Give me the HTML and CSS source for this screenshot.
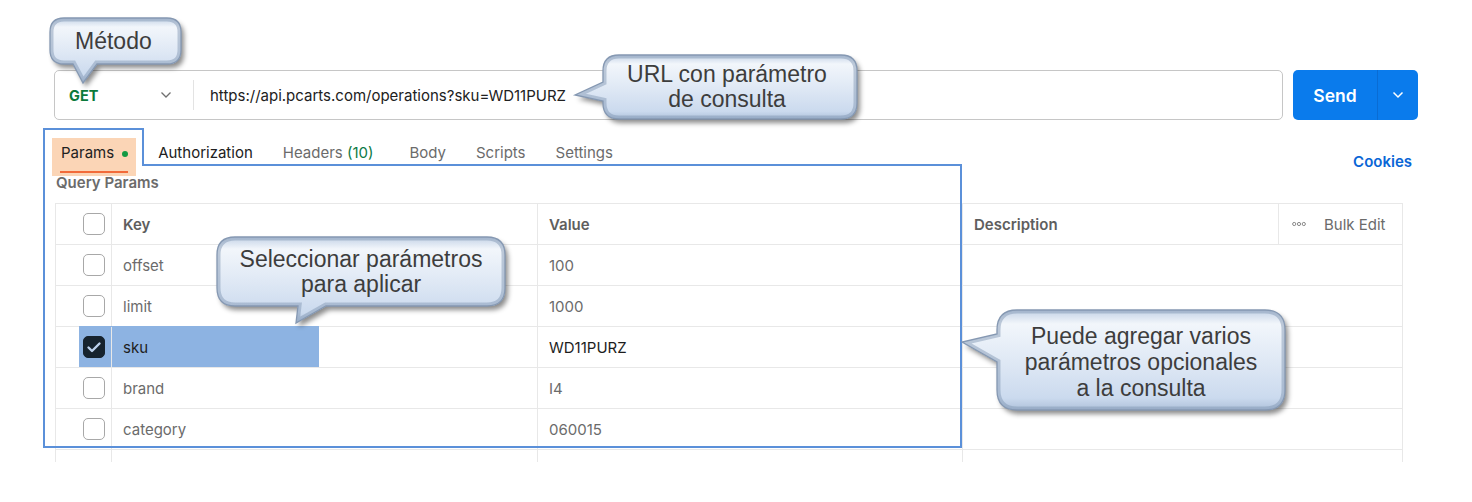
FILE: index.html
```html
<!DOCTYPE html>
<html lang="es">
<head>
<meta charset="utf-8">
<title>Query Params</title>
<link rel="stylesheet" href="styles.css">
</head>
<body>
<main class="app">
  <div class="request-bar">
    <div class="url-box">
      <div class="method">
        <span class="method-name">GET</span>
        <svg class="chev" viewBox="0 0 12 8" width="12" height="8"><path d="M1.5 1.5 L6 6 L10.5 1.5"/></svg>
      </div>
      <span class="url-divider"></span>
      <span class="url-text">https://api.pcarts.com/operations?sku=WD11PURZ</span>
    </div>
    <div class="send-group">
      <button class="send-btn">Send</button>
      <button class="send-more"><svg viewBox="0 0 12 8" width="12" height="8"><path d="M1.5 1.5 L6 6 L10.5 1.5"/></svg></button>
    </div>
  </div>

  <div class="tabs-row">
    <nav class="tabs">
      <span class="tab tab-active">Params<span class="dot"></span></span>
      <span class="tab tab-dark">Authorization</span>
      <span class="tab tab-headers">Headers <span class="count">(10)</span></span>
      <span class="tab">Body</span>
      <span class="tab">Scripts</span>
      <span class="tab">Settings</span>
    </nav>
    <span class="cookies">Cookies</span>
  </div>

  <div class="section-title">Query Params</div>

  <div class="params-table">
    <div class="row head">
      <div class="cell check"><span class="box"></span></div>
      <div class="cell">Key</div>
      <div class="cell">Value</div>
      <div class="cell">Description</div>
      <div class="cell bulk">
        <svg class="dots" viewBox="0 0 14 6" width="14" height="6"><circle cx="2.2" cy="3" r="1.6"/><circle cx="7" cy="3" r="1.6"/><circle cx="11.8" cy="3" r="1.6"/></svg>
        <span>Bulk Edit</span>
      </div>
    </div>
    <div class="row">
      <div class="cell check"><span class="box"></span></div>
      <div class="cell">offset</div>
      <div class="cell">100</div>
      <div class="cell desc"></div>
    </div>
    <div class="row">
      <div class="cell check"><span class="box"></span></div>
      <div class="cell">limit</div>
      <div class="cell">1000</div>
      <div class="cell desc"></div>
    </div>
    <div class="row row-selected">
      <span class="row-mark"></span>
      <div class="cell check"><span class="box box-on"><svg viewBox="0 0 22 22" width="22" height="22"><path d="M5.5 11.5 L9 15 L16.5 7.5"/></svg></span></div>
      <div class="cell strong">sku</div>
      <div class="cell strong">WD11PURZ</div>
      <div class="cell desc"></div>
    </div>
    <div class="row">
      <div class="cell check"><span class="box"></span></div>
      <div class="cell">brand</div>
      <div class="cell">I4</div>
      <div class="cell desc"></div>
    </div>
    <div class="row">
      <div class="cell check"><span class="box"></span></div>
      <div class="cell">category</div>
      <div class="cell">060015</div>
      <div class="cell desc"></div>
    </div>
    <div class="row row-tail">
      <div class="cell check"></div>
      <div class="cell"></div>
      <div class="cell"></div>
      <div class="cell desc"></div>
    </div>
  </div>
</main>

<svg class="annotations" width="1472" height="502" viewBox="0 0 1472 502">
  <defs>
    <linearGradient id="bubFill" x1="0" y1="0" x2="0" y2="1">
      <stop offset="0" stop-color="#c3d2e6"/>
      <stop offset="0.14" stop-color="#f2f6fb"/>
      <stop offset="0.5" stop-color="#e0e9f5"/>
      <stop offset="0.88" stop-color="#cbdaee"/>
      <stop offset="1" stop-color="#aec1da"/>
    </linearGradient>
    <filter id="bubShadow" x="-10%" y="-15%" width="130%" height="150%">
      <feDropShadow dx="3" dy="4" stdDeviation="2.5" flood-color="#000" flood-opacity="0.45"/>
    </filter>
    <path id="b1" d="M64,18 H167 Q181,18 181,32 V50 Q181,64 167,64 H97 L83,83 L73,64 H64 Q50,64 50,50 V32 Q50,18 64,18 Z"/>
    <path id="b2" d="M619,55 H841 Q857,55 857,71 V103 Q857,119 841,119 H619 Q603,119 603,103 V101 L575,95 L603,82 V71 Q603,55 619,55 Z"/>
    <path id="b3" d="M235,237 H487 Q505,237 505,255 V288 Q505,306 487,306 H326 L296,323 L298,306 H235 Q217,306 217,288 V255 Q217,237 235,237 Z"/>
    <path id="b4" d="M1017,310 H1265 Q1285,310 1285,330 V390 Q1285,410 1265,410 H1017 Q997,410 997,390 V362 L962,342 L997,334 V330 Q997,310 1017,310 Z"/>
    <clipPath id="c1"><use href="#b1"/></clipPath>
    <clipPath id="c2"><use href="#b2"/></clipPath>
    <clipPath id="c3"><use href="#b3"/></clipPath>
    <clipPath id="c4"><use href="#b4"/></clipPath>
  </defs>
  <polygon class="frame" points="44,129 143,129 143,165 961,165 961,447 44,447"/>
  <g filter="url(#bubShadow)">
    <use href="#b1" class="bubble"/>
    <use href="#b2" class="bubble"/>
    <use href="#b3" class="bubble"/>
    <use href="#b4" class="bubble"/>
  </g>
  <use href="#b1" class="rim" clip-path="url(#c1)"/>
  <use href="#b2" class="rim" clip-path="url(#c2)"/>
  <use href="#b3" class="rim" clip-path="url(#c3)"/>
  <use href="#b4" class="rim" clip-path="url(#c4)"/>
  <use href="#b1" class="edge"/>
  <use href="#b2" class="edge"/>
  <use href="#b3" class="edge"/>
  <use href="#b4" class="edge"/>
</svg>

<div class="callout lbl-metodo">Método</div>
<div class="callout lbl-url">URL con parámetro<br>de consulta</div>
<div class="callout lbl-sel">Seleccionar parámetros<br>para aplicar</div>
<div class="callout lbl-puede">Puede agregar varios<br>parámetros opcionales<br>a la consulta</div>
</body>
</html>
```

FILE: styles.css
```css
* {
  box-sizing: border-box;
  margin: 0;
  padding: 0;
}

html, body {
  background: #ffffff;
}

body {
  width: 1472px;
  height: 502px;
  overflow: hidden;
  position: relative;
  font-family: Inter, "Noto Sans", sans-serif;
  font-size: 15px;
  color: #212121;
}

.app {
  padding: 70px 54px 0 54px;
}

/* request bar */
.request-bar {
  display: flex;
  gap: 10px;
  height: 50px;
}

.url-box {
  flex: 1;
  display: flex;
  align-items: center;
  border: 1px solid #c6c6c6;
  border-radius: 5px;
}

.method {
  display: flex;
  align-items: center;
  width: 138px;
  height: 100%;
  padding: 0 21px 0 14px;
}

.method-name {
  color: #0b7a3b;
  font-weight: 700;
  font-size: 14.5px;
}

.chev {
  margin-left: auto;
  fill: none;
  stroke: #707070;
  stroke-width: 1.3;
}

.url-divider {
  width: 1px;
  height: 30px;
  background: #e3e3e3;
}

.url-text {
  margin-left: 16px;
  font-size: 15px;
  color: #212121;
}

.send-group {
  display: flex;
  width: 125px;
  border-radius: 5px;
  overflow: hidden;
  background: #0a7bec;
}

.send-btn {
  width: 85px;
  border: 0;
  border-right: 1px solid #0a6cd4;
  background: none;
  color: #ffffff;
  font: 600 17.5px Inter, "Noto Sans", sans-serif;
}

.send-more {
  flex: 1;
  border: 0;
  background: none;
  display: flex;
  align-items: center;
  justify-content: center;
}

.send-more svg {
  fill: none;
  stroke: #ffffff;
  stroke-width: 1.5;
}

/* tabs */
.tabs-row {
  display: flex;
  justify-content: space-between;
  margin-top: 18px;
  height: 38px;
}

.tabs {
  display: flex;
  gap: 30px;
  padding-left: 7px;
}

.tab {
  position: relative;
  display: flex;
  align-items: flex-start;
  padding-top: 5px;
  line-height: 20px;
  color: #6b6b6b;
  white-space: pre;
}

.tab-dark {
  color: #212121;
}

.tab-headers {
  margin-right: 6px;
}

.tab-active {
  color: #212121;
  isolation: isolate;
}

.tab-active::before {
  content: "";
  position: absolute;
  left: -9px;
  right: -8px;
  top: 0;
  bottom: 0;
  background: #fbd5b6;
  z-index: -1;
}

.tab-active::after {
  content: "";
  position: absolute;
  left: -1px;
  right: 0;
  top: 33px;
  height: 2px;
  background: #f26b3a;
}

.dot {
  width: 6px;
  height: 6px;
  border-radius: 50%;
  background: #129a43;
  margin: 8px 0 0 8px;
}

.count {
  color: #0c7a45;
}

.cookies {
  padding-top: 14px;
  line-height: 20px;
  margin-right: 6px;
  color: #0a66d6;
  font-weight: 600;
}

.section-title {
  margin-top: -2px;
  padding-left: 2px;
  line-height: 18px;
  font-weight: 600;
  color: #6b6b6b;
}

/* table */
.params-table {
  margin-top: 11px;
  margin-left: 1px;
  width: 1348px;
  border-top: 1px solid #e8e8e8;
  border-left: 1px solid #e8e8e8;
}

.row {
  position: relative;
  display: grid;
  grid-template-columns: 56px 426px 425px 316px 124px;
  height: 41px;
}

.cell {
  position: relative;
  display: flex;
  align-items: center;
  padding-left: 11px;
  border-right: 1px solid #e8e8e8;
  border-bottom: 1px solid #e8e8e8;
  color: #6b6b6b;
}

.cell.desc {
  grid-column: span 2;
}

.cell.check {
  padding-left: 27px;
}

.head .cell {
  font-weight: 600;
  color: #5e5e5e;
}

.head .cell.bulk {
  padding-left: 13px;
  font-weight: 400;
  color: #6b6b6b;
}

.dots {
  fill: none;
  stroke: #8a8a8a;
  stroke-width: 1;
  margin-right: 18px;
}

.box {
  display: block;
  width: 22px;
  height: 22px;
  border: 1.5px solid #a8a8a8;
  border-radius: 5px;
  background: #ffffff;
}

.box-on {
  position: relative;
  background: #16232e;
  border-color: #16232e;
}

.box-on svg {
  position: absolute;
  left: -1.5px;
  top: -1.5px;
  fill: none;
  stroke: #bcd1ec;
  stroke-width: 2.4;
  stroke-linecap: round;
  stroke-linejoin: round;
}

.cell.strong {
  color: #1d1d1d;
}

.row-mark {
  position: absolute;
  left: 23px;
  top: -1px;
  width: 240px;
  height: 41px;
  background: #8db3e2;
}

.row-tail {
  height: 12px;
}

.row-tail .cell {
  border-bottom: 0;
}

/* annotations */
.annotations {
  position: absolute;
  left: 0;
  top: 0;
  pointer-events: none;
}

.frame {
  fill: none;
  stroke: #5b90d9;
  stroke-width: 2;
}

.bubble {
  fill: url(#bubFill);
  stroke: none;
}

.rim {
  fill: none;
  stroke: #7d93b0;
  stroke-opacity: 0.45;
  stroke-width: 7;
}

.edge {
  fill: none;
  stroke: #8598b2;
  stroke-width: 1.3;
}

.callout {
  position: absolute;
  display: flex;
  align-items: center;
  justify-content: center;
  text-align: center;
  font-family: "Liberation Sans", Arial, sans-serif;
  font-size: 23px;
  line-height: 25px;
  color: #3d3d3d;
}

.lbl-metodo {
  left: 50px;
  top: 18px;
  width: 131px;
  height: 46px;
  justify-content: flex-start;
  padding-left: 25px;
}

.lbl-url {
  left: 600px;
  top: 55px;
  width: 254px;
  height: 64px;
}

.lbl-sel {
  left: 217px;
  top: 237px;
  width: 288px;
  height: 69px;
}

.lbl-puede {
  left: 997px;
  top: 310px;
  width: 288px;
  height: 100px;
  line-height: 26px;
  padding-top: 3px;
}
```
